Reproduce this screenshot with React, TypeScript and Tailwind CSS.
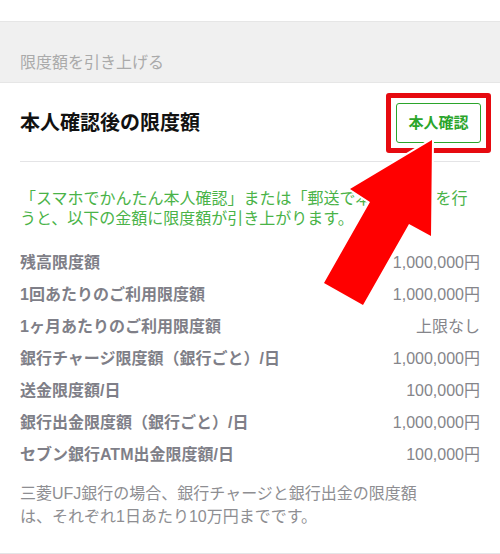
const limits = [
  { label: "残高限度額", value: "1,000,000円" },
  { label: "1回あたりのご利用限度額", value: "1,000,000円" },
  { label: "1ヶ月あたりのご利用限度額", value: "上限なし" },
  { label: "銀行チャージ限度額（銀行ごと）/日", value: "1,000,000円" },
  { label: "送金限度額/日", value: "100,000円" },
  { label: "銀行出金限度額（銀行ごと）/日", value: "1,000,000円" },
  { label: "セブン銀行ATM出金限度額/日", value: "100,000円" },
];

const Callout = () => {
  return <>
    <span className="pointer-events-none absolute -inset-[10px] rounded-[3px] border-5 border-[#e60a10]"></span>
    <svg className="pointer-events-none absolute top-[34px] right-[47px] h-[172px] w-[114px]" viewBox="0 0 114 172" aria-hidden="true">
      <path d="M112 3L30 52L50 65L4 146L43 168L89 87L111 99Z" fill="#ff0000" stroke="#ffffff" strokeWidth="4" paintOrder="stroke"></path>
    </svg>
  </>
}

const LimitTable = () => {
  return <table className="mt-[18px] w-full text-base">
    <tbody>
      {limits.map(({ label, value }) => (
        <tr key={label} className="h-8">
          <th scope="row" className="p-0 text-left leading-8 font-bold text-[#7f7f88]">{label}</th>
          <td className="p-0 text-right leading-8 text-[#85858a]">{value}</td>
        </tr>
      ))}
    </tbody>
  </table>
}

export default function App() {
  return <main lang="ja" className="bg-white pt-[21px] font-['Liberation_Sans','Noto_Sans_CJK_JP',sans-serif]">
    <div className="border-y border-[#e6e6e6] bg-[#f0f0f0] px-5 pt-[29px] pb-[7px]">
      <p className="text-base text-[#aaaaaa]">限度額を引き上げる</p>
    </div>
    <section className="border-b border-[#e4e4e6] px-5 pb-[25px]">
      <div className="flex h-[79px] items-center justify-between border-b border-[#e4e4e6] pt-0.5">
        <h1 className="text-xl font-bold text-[#111111]">本人確認後の限度額</h1>
        <div className="relative z-10 -mr-px">
          <button type="button" className="block h-10 w-[85px] rounded-[3px] border border-[#2ba52b] text-[15px] font-bold text-[#2ba52b]">本人確認</button>
          <Callout />
        </div>
      </div>
      <p className="mt-[27px] text-base leading-5 text-[#4ab348]">
        「スマホでかんたん本人確認」または「郵送で本人確認」を行うと、以下の金額に限度額が引き上がります。
      </p>
      <LimitTable />
      <p className="mt-[11px] text-base leading-[23px] text-[#8e8e92]">
        三菱UFJ銀行の場合、銀行チャージと銀行出金の限度額<br />
        は、それぞれ1日あたり10万円までです。
      </p>
    </section>
  </main>
}
